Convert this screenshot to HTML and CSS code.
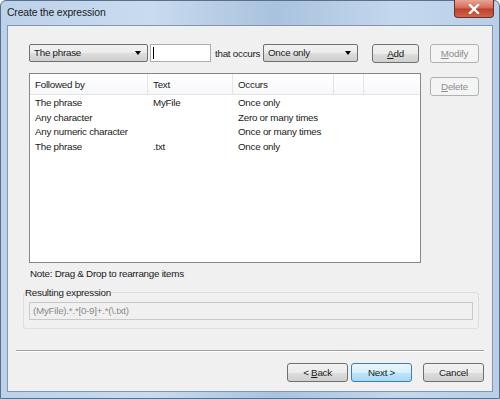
FILE: index.html
```html
<!DOCTYPE html>
<html lang="en">
<head>
  <meta charset="UTF-8">
  <title>Create the expression</title>
  <link rel="stylesheet" href="styles.css">
</head>
<body>
  <div class="window">
    <div class="titlebar">
      <span class="title">Create the expression</span>
      <div class="close">
        <svg width="14" height="10" viewBox="0 0 14 10">
          <path d="M3 1 L11 9 M11 1 L3 9" stroke="#fff" stroke-width="2.4" stroke-linecap="square"/>
        </svg>
      </div>
    </div>

    <div class="client">
      <div class="builder">
        <div class="combo wide">The phrase<span class="arrow"></span></div>
        <div class="textbox"><span class="caret"></span></div>
        <span class="label">that occurs</span>
        <div class="combo narrow">Once only<span class="arrow"></span></div>
        <button class="btn add"><u>A</u>dd</button>
        <button class="btn side" disabled><u>M</u>odify</button>
      </div>

      <div class="main">
        <div class="listview">
          <div class="lv-row lv-head">
            <span class="c1">Followed by</span>
            <span class="c2">Text</span>
            <span class="c3">Occurs</span>
            <span class="c4"></span>
          </div>
          <div class="lv-row"><span class="c1">The phrase</span><span class="c2">MyFile</span><span class="c3">Once only</span></div>
          <div class="lv-row"><span class="c1">Any character</span><span class="c2"></span><span class="c3">Zero or many times</span></div>
          <div class="lv-row"><span class="c1">Any numeric character</span><span class="c2"></span><span class="c3">Once or many times</span></div>
          <div class="lv-row"><span class="c1">The phrase</span><span class="c2">.txt</span><span class="c3">Once only</span></div>
        </div>
        <div class="side-col">
          <button class="btn side" disabled><u>D</u>elete</button>
        </div>
      </div>

      <p class="note">Note: Drag &amp; Drop to rearrange items</p>

      <fieldset class="group">
        <legend>Resulting expression</legend>
        <div class="result">(MyFile).*.*[0-9]+.*(\.txt)</div>
      </fieldset>

      <div class="separator"></div>

      <div class="footer">
        <button class="btn nav">&lt; <u>B</u>ack</button>
        <button class="btn nav default">Next &gt;</button>
        <button class="btn nav cancel">Cancel</button>
      </div>
    </div>
  </div>
</body>
</html>
```

FILE: styles.css
```css
body {
  margin: 0;
  font-family: "Liberation Sans", Arial, sans-serif;
  font-size: 9.8px;
  letter-spacing: -0.25px;
  color: #1a1a1a;
  background: #fff;
}
.window {
  width: 500px;
  height: 399px;
  box-sizing: border-box;
  display: flex;
  flex-direction: column;
  padding: 0 6px 6px 6px;
  border: 1px solid #5a6f8c;
  border-radius: 6px 6px 0 0;
  background: linear-gradient(90deg, #bcd2ea 0%, #c9dbee 30%, #a9c2de 55%, #c4d8ed 80%, #b8cfe8 100%);
}
.titlebar {
  height: 24px;
  display: flex;
  align-items: flex-start;
  justify-content: space-between;
}
.title {
  margin-top: 6px;
  font-size: 10.4px;
  letter-spacing: -0.15px;
  color: #1c1c1c;
}
.close {
  width: 38px;
  height: 17px;
  margin-top: -1px;
  margin-right: -1px;
  display: flex;
  align-items: center;
  justify-content: center;
  border: 1px solid #6c2d26;
  border-top: none;
  border-radius: 0 0 4px 4px;
  background: linear-gradient(#e8a597 0%, #d56d58 45%, #c0402a 55%, #d0644a 100%);
}
.client {
  flex: 1;
  display: flex;
  flex-direction: column;
  background: #f0f0f0;
  border: 1px solid #8396b0;
  padding: 17px 8px 0 21px;
}
.builder {
  display: flex;
  align-items: center;
  height: 20px;
}
.builder > * {
  flex-shrink: 0;
}
.combo {
  position: relative;
  height: 18px;
  box-sizing: border-box;
  padding: 2px 4px;
  border: 1px solid #707070;
  border-radius: 2px;
  background: linear-gradient(#f2f2f2 0%, #ebebeb 50%, #dddddd 51%, #cfcfcf 100%);
}
.combo.wide { width: 119px; }
.combo.narrow { width: 95px; }
.arrow {
  position: absolute;
  right: 6px;
  top: 6px;
  border-left: 3.5px solid transparent;
  border-right: 3.5px solid transparent;
  border-top: 4px solid #000;
}
.textbox {
  width: 61px;
  height: 18px;
  box-sizing: border-box;
  margin-left: 2px;
  border: 1px solid #abadb3;
  background: #fff;
  padding: 2px 0 0 2px;
}
.caret {
  display: block;
  width: 1px;
  height: 12px;
  background: #000;
}
.label {
  width: 46px;
  margin: 0 2px 0 4px;
  white-space: nowrap;
}
.btn {
  font-family: inherit;
  font-size: 9.8px;
  letter-spacing: -0.25px;
  height: 19px;
  padding: 0;
  box-sizing: border-box;
  border: 1px solid #707070;
  border-radius: 3px;
  color: #1a1a1a;
  background: linear-gradient(#f2f2f2 0%, #ebebeb 50%, #dddddd 51%, #cfcfcf 100%);
}
.btn[disabled] {
  color: #8f8f8f;
  border-color: #adb2b5;
  background: #f4f4f4;
}
.add {
  width: 47px;
  margin-left: 14px;
}
.side {
  width: 49px;
  margin-left: 11px;
}
.main {
  display: flex;
  margin-top: 10px;
}
.listview {
  width: 392px;
  height: 190px;
  box-sizing: border-box;
  border: 1px solid #828790;
  background: #fff;
}
.lv-row {
  display: flex;
  height: 14.6px;
  line-height: 14.6px;
  white-space: nowrap;
}
.lv-row span {
  box-sizing: border-box;
  padding-left: 5px;
}
.lv-head {
  height: 20px;
  line-height: 21px;
  margin-bottom: 1px;
  border-bottom: 1px solid #e5e5e5;
  background: linear-gradient(#ffffff, #f7f8fa);
}
.lv-head span {
  border-right: 1px solid #e5e5e5;
}
.c1 { width: 118px; }
.c2 { width: 85px; }
.c3 { width: 101px; }
.c4 { width: 30px; }
.side-col {
  display: flex;
  flex-direction: column;
  padding-top: 4px;
}
.side-col .side {
  margin-left: 9px;
}
.note {
  margin: 5px 0 0 1px;
  height: 14px;
}
.group {
  margin: 5px 0 0 -6px;
  width: 456px;
  height: 42px;
  box-sizing: border-box;
  border: 1px solid #d5dfe5;
  border-radius: 3px;
  padding: 4px 5px 0 5px;
}
.group legend {
  padding: 0;
  margin-left: -4px;
  color: #1c1c1c;
}
.result {
  height: 18px;
  box-sizing: border-box;
  border: 1px solid #c9c9c9;
  padding: 2px 3px;
  color: #8a8a8a;
}
.separator {
  margin: 21px 0 0 -13px;
  width: 468px;
  height: 1px;
  background: #a0a0a0;
  border-bottom: 1px solid #fff;
}
.footer {
  display: flex;
  justify-content: flex-end;
  gap: 3px;
  margin-top: 11px;
}
.nav {
  width: 61px;
}
.default {
  border-color: #3c7fb1;
  background: linear-gradient(#eaf6fd 0%, #d9f0fc 50%, #bee6fd 51%, #a7d9f5 100%);
}
.cancel {
  margin-left: 8px;
}
```
